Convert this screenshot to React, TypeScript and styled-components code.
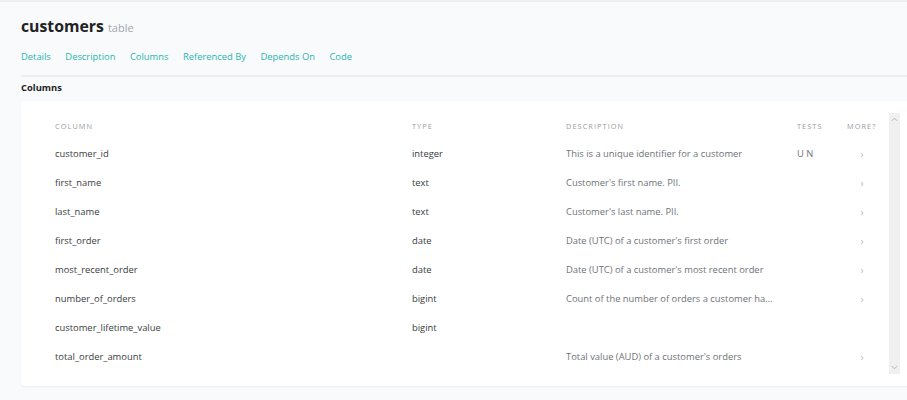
import React from 'react';
import styled, { createGlobalStyle } from 'styled-components';

const GlobalStyle = createGlobalStyle`
  html, body {
    margin: 0;
    padding: 0;
    background-color: #f9fafc;
    overflow: hidden;
  }

  body {
    font-family: "Open Sans", "Noto Sans", sans-serif;
    color: #333;
  }
`;

const Page = styled.div`
  width: 907px;
  height: 400px;
  border-top: 2px solid #eef0f3;
  box-sizing: border-box;
  padding: 13px 0 0 21px;
  overflow: hidden;
`;

const TitleRow = styled.div`
  display: flex;
  align-items: baseline;
  gap: 4px;
  height: 25px;
`;

const Title = styled.h1`
  margin: 0;
  font-size: 15.8px;
  font-weight: 700;
  color: #222;
`;

const Kind = styled.span`
  font-size: 11px;
  color: #a3a6ab;
`;

const Tabs = styled.nav`
  display: flex;
  gap: 14.5px;
  margin-top: 10px;
  padding-bottom: 11px;
  border-bottom: 2px solid #eceef1;
`;

const Tab = styled.a`
  font-size: 9.4px;
  line-height: 14px;
  color: #2ab5ae;
  text-decoration: none;
  cursor: pointer;
`;

const SectionTitle = styled.h2`
  margin: 3px 0 0;
  font-size: 9.4px;
  font-weight: 700;
  color: #222;
  line-height: 16px;
`;

const Card = styled.section`
  display: flex;
  margin-top: 5px;
  width: 890px;
  background-color: #fff;
  border-radius: 4px;
  box-shadow: 0 1px 2px rgba(0, 0, 0, 0.05);
  padding: 11px 0 15px 34px;
  box-sizing: border-box;
`;

const Table = styled.div`
  flex: 1;
`;

const Row = styled.div<{ $header?: boolean }>`
  display: grid;
  grid-template-columns: 357px 154px 231px 50px 30px;
  align-items: center;
  height: ${(p) => (p.$header ? '27px' : '29px')};
  font-size: ${(p) => (p.$header ? '7.3px' : '9.4px')};
  letter-spacing: ${(p) => (p.$header ? '1.1px' : '0')};
  text-transform: ${(p) => (p.$header ? 'uppercase' : 'none')};
  color: ${(p) => (p.$header ? '#979ba0' : '#3a3d40')};
`;

const Cell = styled.div<{ $muted?: boolean; $wide?: boolean }>`
  white-space: nowrap;
  overflow: hidden;
  text-overflow: ellipsis;
  padding-right: ${(p) => (p.$wide ? '21px' : '12px')};
  color: ${(p) => (p.$muted ? '#6f7378' : 'inherit')};

  &:last-child {
    padding-right: 0;
    overflow: visible;
  }
`;

const Chevron = styled.span`
  display: block;
  text-align: center;
  color: #b5b8bc;
  font-size: 10px;
`;

const ScrollTrack = styled.div`
  display: flex;
  flex-direction: column;
  justify-content: space-between;
  align-items: center;
  width: 11px;
  margin: 1px 11px -3px 12px;
  background-color: #f0f0f0;
  color: #a8a8a8;
`;

const Arrow = styled.svg`
  width: 7px;
  height: 7px;
  margin: 3px 0;
`;

type Column = {
  name: string;
  type: string;
  description: string;
  tests?: string;
  more: boolean;
};

const columns: Column[] = [
  { name: 'customer_id', type: 'integer', description: 'This is a unique identifier for a customer', tests: 'U N', more: true },
  { name: 'first_name', type: 'text', description: "Customer's first name. PII.", more: true },
  { name: 'last_name', type: 'text', description: "Customer's last name. PII.", more: true },
  { name: 'first_order', type: 'date', description: "Date (UTC) of a customer's first order", more: true },
  { name: 'most_recent_order', type: 'date', description: "Date (UTC) of a customer's most recent order", more: true },
  { name: 'number_of_orders', type: 'bigint', description: 'Count of the number of orders a customer has placed', more: true },
  { name: 'customer_lifetime_value', type: 'bigint', description: '', more: false },
  { name: 'total_order_amount', type: '', description: "Total value (AUD) of a customer's orders", more: true },
];

const tabs = ['Details', 'Description', 'Columns', 'Referenced By', 'Depends On', 'Code'];

const App = () => {
  return (
    <>
      <GlobalStyle />
      <Page>
        <TitleRow>
          <Title>customers</Title>
          <Kind>table</Kind>
        </TitleRow>
        <Tabs>
          {tabs.map((tab) => (
            <Tab key={tab}>{tab}</Tab>
          ))}
        </Tabs>
        <SectionTitle>Columns</SectionTitle>
        <Card>
          <Table>
            <Row $header>
              <Cell>Column</Cell>
              <Cell>Type</Cell>
              <Cell>Description</Cell>
              <Cell>Tests</Cell>
              <Cell>More?</Cell>
            </Row>
            {columns.map((col) => (
              <Row key={col.name}>
                <Cell>{col.name}</Cell>
                <Cell>{col.type}</Cell>
                <Cell $muted $wide>{col.description}</Cell>
                <Cell $muted>{col.tests}</Cell>
                <Cell>{col.more && <Chevron>&rsaquo;</Chevron>}</Cell>
              </Row>
            ))}
          </Table>
          <ScrollTrack>
            <Arrow viewBox="0 0 8 8">
              <path d="M1 5.5 L4 2.5 L7 5.5" fill="none" stroke="currentColor" strokeWidth="1" />
            </Arrow>
            <Arrow viewBox="0 0 8 8">
              <path d="M1 2.5 L4 5.5 L7 2.5" fill="none" stroke="currentColor" strokeWidth="1" />
            </Arrow>
          </ScrollTrack>
        </Card>
      </Page>
    </>
  );
};

export default App;
